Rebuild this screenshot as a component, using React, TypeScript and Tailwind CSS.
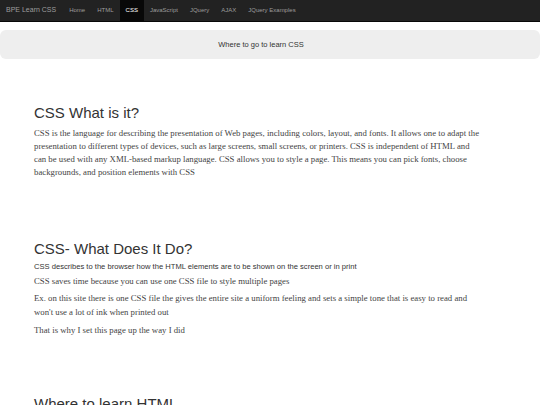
import React from 'react';

const links = ['Home', 'HTML', 'CSS', 'JavaScript', 'JQuery', 'AJAX', 'JQuery Examples'];

const sans = { fontFamily: '"Liberation Sans", Arial, sans-serif' };
const serif = { fontFamily: '"Liberation Serif", "Times New Roman", serif' };

export default function App() {
  return (
    <div className="min-h-screen bg-white" style={sans}>
      <nav className="flex h-[22px] items-stretch bg-[#222] border-b border-[#080808]">
        <a className="flex items-center pl-[6px] mr-[7px] text-[7px] text-[#9d9d9d]">BPE Learn CSS</a>
        <ul className="flex items-stretch">
          {links.map((l) => (
            <li key={l}>
              <a
                className={
                  l === 'CSS'
                    ? 'flex h-full items-center px-[6px] text-[6px] text-white bg-[#080808]'
                    : 'flex h-full items-center px-[6px] text-[6px] text-[#9d9d9d]'
                }
              >
                {l}
              </a>
            </li>
          ))}
        </ul>
      </nav>

      <div className="mt-[8px] flex h-[29px] items-center justify-center rounded-[6px] bg-[#eee] pr-[18px] text-[7.5px] text-[#333]">
        Where to go to learn CSS
      </div>

      <main className="px-[34px]">
        <section className="pt-[46px]">
          <h1 className="text-[15px] leading-[1.1] text-[#333]">CSS What is it?</h1>
          <p className="mt-[5px] text-[8.75px] leading-[13.3px] text-[#444]" style={serif}>
            CSS is the language for describing the presentation of Web pages, including colors, layout, and fonts. It allows one to adapt the
            <br />
            presentation to different types of devices, such as large screens, small screens, or printers. CSS is independent of HTML and
            <br />
            can be used with any XML-based markup language. CSS allows you to style a page. This means you can pick fonts, choose
            <br />
            backgrounds, and position elements with CSS
          </p>
        </section>

        <section className="pt-[61px]">
          <h2 className="text-[15px] leading-[1.1] text-[#333]">CSS- What Does It Do?</h2>
          <p className="mt-[4px] text-[7.6px] leading-[11px] text-[#333]">
            CSS describes to the browser how the HTML elements are to be shown on the screen or in print
          </p>
          <div className="text-[8.75px] leading-[13.3px] text-[#444]" style={serif}>
            <p className="mt-[3px]">CSS saves time because you can use one CSS file to style multiple pages</p>
            <p className="mt-[4px]">
              Ex. on this site there is one CSS file the gives the entire site a uniform feeling and sets a simple tone that is easy to read and
              <br />
              won't use a lot of ink when printed out
            </p>
            <p className="mt-[5px]">That is why I set this page up the way I did</p>
          </div>
        </section>

        <section className="pt-[59px] pb-10">
          <h2 className="text-[15px] leading-[1.1] text-[#333]">Where to learn HTML</h2>
        </section>
      </main>
    </div>
  );
}
